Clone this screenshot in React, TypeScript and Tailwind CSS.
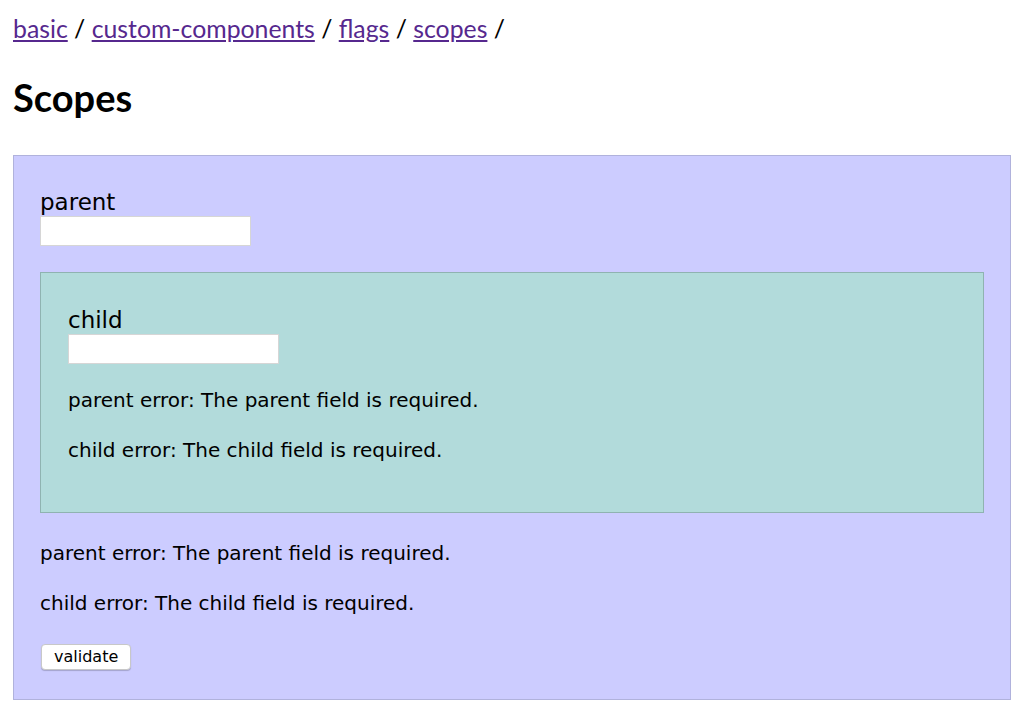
const BODY = '"DejaVu Sans", "Noto Sans", sans-serif';

function Field({ label }: { label: string }) {
  return (
    <div>
      <div className="text-[23px] leading-[28px]">{label}</div>
      <input className="block w-[211px] h-[30px] bg-white border border-[#d6d6d6] outline-none" />
    </div>
  );
}

export default function App() {
  return (
    <div className="relative px-[13px] bg-white text-black min-h-[724px]">
      <div className="pt-[14px] text-[24.8px] leading-[29px]" style={{ fontFamily: 'Lato, sans-serif' }}>
        <a href="#" className="underline text-[#56288e]">basic</a> /{' '}
        <a href="#" className="underline text-[#56288e]">custom-components</a> /{' '}
        <a href="#" className="underline text-[#56288e]">flags</a> /{' '}
        <a href="#" className="underline text-[#56288e]">scopes</a> /
      </div>
      <h1 className="mt-[32px] text-[38px] leading-[45px] font-bold" style={{ fontFamily: 'Lato, sans-serif' }}>
        Scopes
      </h1>
      <div
        className="mt-[35px] bg-[#ccccff] border border-[#b0b2dc] px-[26px] pt-[32px] pb-[29px]"
        style={{ fontFamily: BODY }}
      >
        <Field label="parent" />
        <div className="mt-[26px] bg-[#b2dbdb] border border-[#8fb3b1] px-[27px] pt-[33px] pb-[50px]">
          <Field label="child" />
          <div className="text-[20px] leading-[24px]">
            <p className="mt-[24px]">parent error: The parent field is required.</p>
            <p className="mt-[26px]">child error: The child field is required.</p>
          </div>
        </div>
        <div className="text-[20px] leading-[24px]">
          <p className="mt-[28px]">parent error: The parent field is required.</p>
          <p className="mt-[26px]">child error: The child field is required.</p>
        </div>
        <button className="mt-[29px] ml-px h-[26px] px-[12px] bg-white rounded-[4px] border border-[#c8c8c8] text-[16px] leading-none shadow-[0_1px_1px_rgba(0,0,0,0.2)]">
          validate
        </button>
      </div>
    </div>
  );
}
